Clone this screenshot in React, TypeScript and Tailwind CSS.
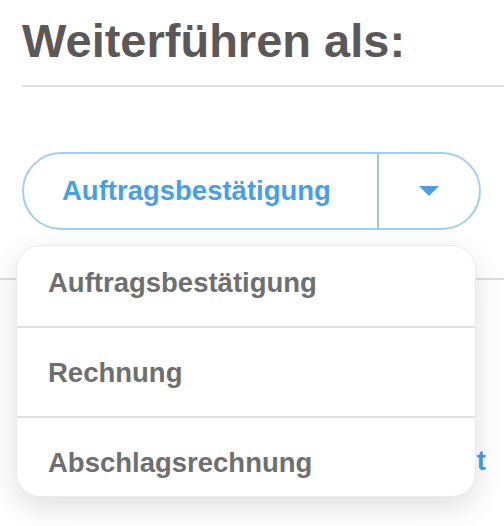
import React from 'react';

const options = ['Auftragsbestätigung', 'Rechnung', 'Abschlagsrechnung'];

const App: React.FC = () => {
  return (
    <div className="relative h-[526px] w-[504px] overflow-hidden bg-white font-['Liberation_Sans',Arial,sans-serif]">
      {/* Heading */}
      <h1 className="pl-[22px] pt-[17px] text-[47px] font-bold leading-none text-[#5d5858]">
        Weiterführen als:
      </h1>
      <div className="ml-[22px] mt-[21px] h-[2px] bg-[#e0e0e0]" />

      {/* Split button */}
      <div className="ml-[22px] mr-[23px] mt-[65px] flex h-[78px] rounded-full border-2 border-[#a0cff0]">
        <div className="flex w-[355px] items-center border-r-2 border-[#a7c1d7] pl-[38px]">
          <span className="text-[27.5px] font-bold leading-none text-[#489fe1]">Auftragsbestätigung</span>
        </div>
        <div className="flex flex-1 items-center justify-center">
          <svg width="20" height="10" viewBox="0 0 20 10">
            <polygon points="0,0 20,0 10,10" fill="#489fe1" />
          </svg>
        </div>
      </div>

      {/* Content behind the menu */}
      <div className="mt-[48px] h-[2px] bg-[#dedede]" />
      <div className="mt-[167px] flex justify-end pr-[18px]">
        <span className="text-[27.5px] font-bold leading-none text-[#489fe1]">Dokument</span>
      </div>

      {/* Dropdown menu */}
      <div className="absolute left-[16px] top-[245px] w-[460px] overflow-hidden rounded-[24px] border border-[#ececec] bg-white shadow-[0_10px_30px_rgba(0,0,0,0.13)]">
        <div className="h-[80px] pl-[31px] pt-[23px]">
          <span className="text-[27.5px] font-bold leading-none text-[#6f6f6f]">{options[0]}</span>
        </div>
        <div className="h-[2px] bg-[#e0e0e0]" />
        <div className="h-[88px] pl-[31px] pt-[31px]">
          <span className="text-[27.5px] font-bold leading-none text-[#6f6f6f]">{options[1]}</span>
        </div>
        <div className="h-[2px] bg-[#e0e0e0]" />
        <div className="h-[78px] pl-[31px] pt-[31px]">
          <span className="text-[27.5px] font-bold leading-none text-[#6f6f6f]">{options[2]}</span>
        </div>
      </div>
    </div>
  );
};

export default App;
